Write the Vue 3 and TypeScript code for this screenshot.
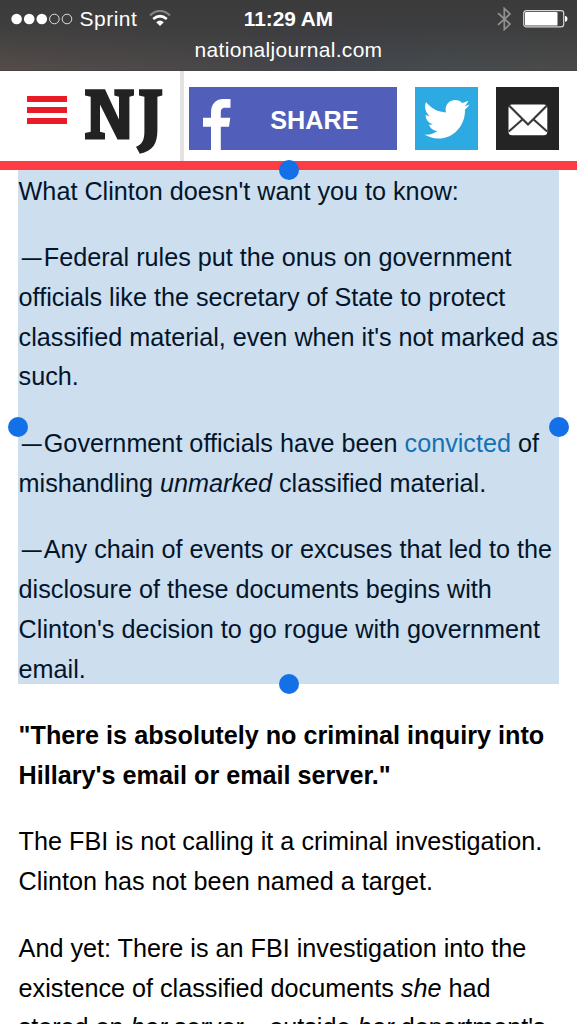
<script setup lang="ts">
interface Run {
  text: string
  kind?: 'em' | 'link' | 'dash'
}

type Line = Run[]

interface Paragraph {
  lines: Line[]
  bold?: boolean
}

const line = (text: string): Line => [{ text }]
const dashed = (...runs: Run[]): Line => [{ text: '—', kind: 'dash' }, ...runs]

const selected: Paragraph[] = [
  { lines: [line("What Clinton doesn't want you to know:")] },
  {
    lines: [
      dashed({ text: 'Federal rules put the onus on government' }),
      line('officials like the secretary of State to protect'),
      line("classified material, even when it's not marked as"),
      line('such.'),
    ],
  },
  {
    lines: [
      dashed({ text: 'Government officials have been ' }, { text: 'convicted', kind: 'link' }, { text: ' of' }),
      [{ text: 'mishandling ' }, { text: 'unmarked', kind: 'em' }, { text: ' classified material.' }],
    ],
  },
  {
    lines: [
      dashed({ text: 'Any chain of events or excuses that led to the' }),
      line('disclosure of these documents begins with'),
      line("Clinton's decision to go rogue with government"),
      line('email.'),
    ],
  },
]

const rest: Paragraph[] = [
  {
    bold: true,
    lines: [line('"There is absolutely no criminal inquiry into'), line('Hillary\'s email or email server."')],
  },
  {
    lines: [line('The FBI is not calling it a criminal investigation.'), line('Clinton has not been named a target.')],
  },
  {
    lines: [
      line('And yet: There is an FBI investigation into the'),
      [{ text: 'existence of classified documents ' }, { text: 'she', kind: 'em' }, { text: ' had' }],
      [
        { text: 'stored on ' },
        { text: 'her', kind: 'em' },
        { text: ' server' },
        { text: '—', kind: 'dash' },
        { text: 'outside ' },
        { text: 'her', kind: 'em' },
        { text: " department's" },
      ],
    ],
  },
]

const sections = [
  { id: 'selected', paragraphs: selected },
  { id: 'rest', paragraphs: rest },
]
const handles = ['top', 'right', 'bottom', 'left']
</script>

<template>
  <div class="phone">
    <div class="status">
      <div class="status-row">
        <div class="carrier">
          <svg width="62" height="12" viewBox="0 0 62 12">
            <circle cx="5.6" cy="6" r="5.3" fill="#fff" />
            <circle cx="18.2" cy="6" r="5.3" fill="#fff" />
            <circle cx="30.8" cy="6" r="5.3" fill="#fff" />
            <circle cx="43.4" cy="6" r="4.8" fill="none" stroke="#ddd" />
            <circle cx="56" cy="6" r="4.8" fill="none" stroke="#ddd" />
          </svg>
          <span class="name">Sprint</span>
          <svg class="wifi" width="22" height="17" viewBox="0 0 22 17">
            <path d="M1 5.4Q11-3.6 21 5.4" fill="none" stroke="#858585" stroke-width="2.2" />
            <path d="M4.2 9Q11 3.2 17.8 9" fill="none" stroke="#fff" stroke-width="2.5" />
            <path d="M7.2 12.2Q11 8.6 14.8 12.2L11 16Z" fill="#fff" />
          </svg>
        </div>
        <div class="clock">11:29 AM</div>
        <div class="power">
          <svg width="15" height="24" viewBox="0 0 15 24">
            <path d="M1 6.2L13 17L7.3 22.5V1.5L13 7L1 17.8" fill="none" stroke="#919191" stroke-width="1.7" />
          </svg>
          <svg width="45" height="18" viewBox="0 0 45 18">
            <rect x=".7" y=".7" width="40" height="16.2" rx="2.6" fill="none" stroke="#d6d6d6" stroke-width="1.2" />
            <rect x="2" y="2" width="32.5" height="13.6" rx="1.2" fill="#fff" />
            <path d="M42 6H42.7Q44.5 6.5 44.5 8.8T42.7 11.8H42Z" fill="#fff" />
          </svg>
        </div>
      </div>
      <div class="site">nationaljournal.com</div>
    </div>

    <header class="header">
      <div class="brand">
        <div class="menu"><i></i><i></i><i></i></div>
        <svg class="logo" width="78" height="67" viewBox="0 0 78 67" fill="#222">
          <path d="M0 1.3H20L34 31.5V8.8L29.3 7.6V1.3H49V7.6L44.4 8.8V51.5H32.5L15 16.5V43.8L20 45V51.5H0V45L5.7 43.8V8.8L0 7.6Z" />
          <path d="M54 1.3H77.3V7.6L72.4 8.8V42C72.4 55.5 68 63 54.8 65.7L51 58.8C57.5 56 59.4 52 59.4 43V8.8L54 7.6Z" />
        </svg>
      </div>
      <div class="share">
        <svg class="fb" width="28" height="51" viewBox="0 0 28 51" fill="#fff">
          <path d="M8 51V27.8H0V18.8H8V14C8 4.5 13 0 20.5 0H27.5V8.7H22.5C18.8 8.7 17.8 10.5 17.8 13.8V18.8H27.3L26 27.8H17.8V51Z" />
        </svg>
        <span>SHARE</span>
      </div>
      <div class="tile twitter">
        <svg width="46" height="40" viewBox="0 0 46 40" fill="#fff">
          <path d="M2 2C7 8.5 14 12 22 12.4C20.2 5.5 25 0 31.2 0C34 0 36.4 1.1 38.2 3C40.4 2.5 42.4 1.8 44.3 .7C43.6 3 42.2 4.6 40.3 5.9C42.2 5.7 43.9 5.2 45.6 4.5C44.4 6.4 42.8 8 41 9.4C41.5 25.3 29.8 38.5 14.2 38.5C9 38.5 4.2 37 .4 34.6C5.3 35.1 9.8 33.8 13.5 31C9.4 30.9 6.1 28.2 4.9 24.5C6.3 24.8 7.7 24.7 9 24.3C4.6 23.3 1.6 19.4 1.6 15C3 15.7 4.3 16.1 5.8 16.2C1.6 13.2-.1 7 2 2Z" />
        </svg>
      </div>
      <div class="tile mail">
        <svg width="40" height="32" viewBox="0 0 40 32">
          <rect x=".5" y=".5" width="38.8" height="30.8" rx="3.5" fill="#fff" />
          <path d="M1 1.5L20 20.5L39 1.5M.8 27.5L14.7 15.2M39.2 27.5L25.3 15.2" fill="none" stroke="#3a3a3a" stroke-width="2.2" />
        </svg>
      </div>
    </header>

    <main class="article">
      <section v-for="s in sections" :key="s.id" :class="s.id">
        <p v-for="(p, i) in s.paragraphs" :key="i" :class="{ bold: p.bold }">
          <span v-for="(l, j) in p.lines" :key="j" class="line"><span v-for="(r, k) in l" :key="k" :class="r.kind">{{ r.text }}</span></span>
        </p>
        <template v-if="s.id === 'selected'">
          <b v-for="h in handles" :key="h" class="handle" :class="h"></b>
        </template>
      </section>
    </main>
  </div>
</template>

<style>
html,
body {
  margin: 0;
  overflow: hidden;
}
</style>

<style scoped>
.phone {
  width: 577px;
  height: 1024px;
  overflow: hidden;
  background: #fff;
  color: #000;
  font-family: 'Liberation Sans', Arial, sans-serif;
}
.status {
  box-sizing: border-box;
  height: 71px;
  background:
    linear-gradient(#3b3b3c, rgba(60, 60, 61, 0.85) 40%, rgba(60, 60, 61, 0)),
    linear-gradient(90deg, #554c4a, #4a4848 35%, #43454f 55%, #454b4e 75%, #4b4a49);
  border-bottom: 1px solid #454446;
  color: #fff;
}
.status-row {
  display: grid;
  grid-template-columns: 1fr auto 1fr;
  align-items: center;
  height: 37px;
}
.carrier {
  display: flex;
  align-items: center;
  padding-left: 11px;
  font-size: 21px;
}
.name {
  margin-left: 6.5px;
  letter-spacing: 0.5px;
}
.wifi {
  margin-left: 11.5px;
}
.clock {
  font-size: 20.8px;
  font-weight: bold;
}
.power {
  display: flex;
  align-items: center;
  justify-content: flex-end;
  gap: 10.5px;
  padding-right: 9.5px;
}
.site {
  margin-top: 1px;
  text-align: center;
  font-size: 21px;
  line-height: 24px;
  letter-spacing: 0.3px;
}
.header {
  box-sizing: border-box;
  display: flex;
  height: 99px;
  border-bottom: 9px solid #fd3c44;
}
.brand {
  box-sizing: border-box;
  display: flex;
  width: 184px;
  padding: 17px 0 0 27px;
  border-right: 4px solid #e3e1e1;
}
.menu {
  display: flex;
  flex-direction: column;
  gap: 5px;
  width: 40px;
  margin: 8px 18px 0 0;
}
.menu i {
  height: 6px;
  background: #e81c27;
}
.share {
  display: flex;
  align-items: center;
  width: 207.3px;
  height: 63px;
  margin: 16.4px 18.3px 0 5.3px;
  background: #515fba;
  color: #fff;
  font-size: 25.2px;
  font-weight: bold;
}
.share span {
  padding-top: 4px;
}
.fb {
  align-self: flex-end;
  margin: 0 39px 0 14px;
}
.tile {
  box-sizing: border-box;
  display: grid;
  place-items: center;
  width: 63px;
  height: 63px;
  margin: 16.4px 18px 0 0;
  padding: 2px 0 0 2px;
}
.twitter {
  background: #2caae1;
}
.mail {
  background: #242424;
}
.mail svg {
  margin-left: -1px;
}
.article {
  position: relative;
  z-index: 0;
  margin: 0 18px;
  font-size: 25.2px;
  line-height: 39.7px;
}
.selected {
  position: relative;
  width: 541px;
  padding-top: 1.5px;
}
.selected::before {
  content: '';
  position: absolute;
  z-index: -1;
  inset: 0 0 5.5px;
  background: #cddeee;
}
.selected p {
  color: #03152b;
}
p {
  margin: 0;
}
p + p {
  margin-top: 27px;
}
.rest {
  padding-top: 26.8px;
}
.line {
  display: block;
  width: max-content;
  padding-left: 0.6px;
  white-space: pre;
}
.bold {
  font-weight: bold;
}
.em {
  font-style: italic;
}
.link {
  color: #1472b3;
}
.dash {
  display: inline-block;
  line-height: 1;
  transform: scaleX(0.79);
}
.handle {
  position: absolute;
  width: 20px;
  height: 20px;
  border-radius: 50%;
  background: #1470e6;
}
.top {
  top: -10px;
  left: 260.5px;
}
.bottom {
  bottom: -4.5px;
  left: 260.5px;
}
.left {
  top: 247px;
  left: -10px;
}
.right {
  top: 247px;
  right: -10px;
}
</style>
